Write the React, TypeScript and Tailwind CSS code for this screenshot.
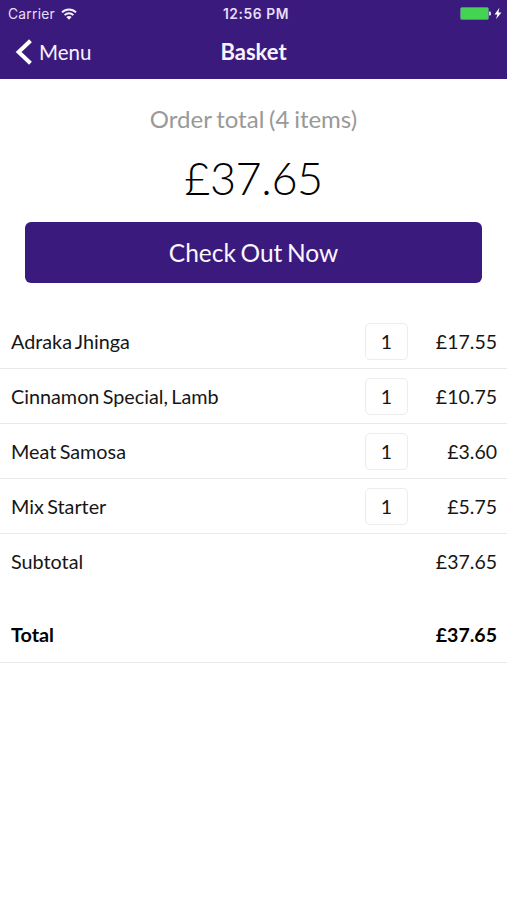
import React from "react";

type Item = { name: string; qty: number; price: string };

const items: Item[] = [
  { name: "Adraka Jhinga", qty: 1, price: "£17.55" },
  { name: "Cinnamon Special, Lamb", qty: 1, price: "£10.75" },
  { name: "Meat Samosa", qty: 1, price: "£3.60" },
  { name: "Mix Starter", qty: 1, price: "£5.75" },
];

function StatusBar() {
  return (
    <div className="grid h-[27px] grid-cols-3 items-center pr-[5px] pl-[8px] font-['Inter','Liberation_Sans',sans-serif] text-[13.8px] text-[#e9ddfa]">
      <div className="flex items-center gap-[6px] pt-px">
        <span className="tracking-[0.25px]">Carrier</span>
        <svg width="16" height="12" viewBox="0 0 16 12" fill="none" stroke="#f6f0ff" strokeWidth="2">
          <path d="M1 4.4C5 .5 11 .5 15 4.4" />
          <path d="M3.6 7.1c2.5-2.4 6.3-2.4 8.8 0" />
          <path d="M8 11.7 5.3 9c1.5-1.4 3.9-1.4 5.4 0Z" fill="#f6f0ff" stroke="none" />
        </svg>
      </div>
      <span className="pt-px pl-[2px] text-center font-semibold tracking-[0.6px]">12:56 PM</span>
      <div className="flex items-center justify-end">
        <svg width="42" height="13" viewBox="0 0 42 13">
          <rect x=".5" y=".5" width="28" height="12" rx="1.5" fill="#43d551" stroke="#6b7f9d" strokeWidth=".8" />
          <path d="M29 4.5h.7a1.3 1.3 0 0 1 1.3 1.3v1.4a1.3 1.3 0 0 1-1.3 1.3H29Z" fill="#d8cdec" />
          <path d="M39.4.8 34.6 7.4h2.8L36 12.3 41.4 5.4h-3Z" fill="#fff" />
        </svg>
      </div>
    </div>
  );
}

function NavBar() {
  return (
    <div className="grid h-[50px] grid-cols-3 items-center px-[15px] text-[#f8f2ff]">
      <div className="flex items-center gap-[6px] text-[20.5px] leading-[50px]">
        <svg width="18" height="26" viewBox="0 0 18 26" fill="none" stroke="#fff" strokeWidth="4">
          <path d="M15.5 1.8 3.6 13l11.9 11.2" />
        </svg>
        <span>Menu</span>
      </div>
      <h1 className="text-center text-[22px] leading-[50px] font-bold">Basket</h1>
    </div>
  );
}

function ItemRow({ name, qty, price }: Item) {
  return (
    <li className="flex h-[55px] items-center border-b border-[#e9e9e9] pr-[10px] pl-[11px]">
      <span className="flex-1 pt-px text-[19.8px] [word-spacing:-1.7px]">{name}</span>
      <span className="flex h-[37px] w-[43px] items-center justify-center rounded-[5px] border border-[#ececec] pt-px">
        {qty}
      </span>
      <span className="w-[89px] pt-[2px] text-right">{price}</span>
    </li>
  );
}

export default function App() {
  return (
    <div className="h-[900px] w-full overflow-hidden bg-white font-['Lato','Liberation_Sans',sans-serif] text-[19.5px] text-[#161616]">
      <header className="h-[79px] bg-[#3a1b7d]">
        <StatusBar />
        <NavBar />
      </header>
      <section className="flex flex-col items-center px-[25px]">
        <p className="mt-[24px] text-[24px] leading-[32px] text-[#999] [word-spacing:-1.4px]">Order total (4 items)</p>
        <p className="mt-[15px] text-[45px] leading-[56px] font-light tracking-[-0.4px] text-black">£37.65</p>
        <button className="mt-[16px] h-[61px] w-full rounded-[6px] bg-[#3a1b7d] pt-px text-[24.5px] text-[#fbf6ff] [word-spacing:-1.7px]">
          Check Out Now
        </button>
      </section>
      <ul className="mt-[31px]">
        {items.map((item) => (
          <ItemRow key={item.name} {...item} />
        ))}
      </ul>
      <div className="flex h-[55px] items-center justify-between pr-[10px] pl-[11px]">
        <span className="text-[19.8px]">Subtotal</span>
        <span>£37.65</span>
      </div>
      <div className="mt-[19px] flex h-[55px] items-center justify-between border-b border-[#e9e9e9] pr-[10px] pl-[11px] font-bold text-black">
        <span className="text-[19.8px]">Total</span>
        <span>£37.65</span>
      </div>
    </div>
  );
}
